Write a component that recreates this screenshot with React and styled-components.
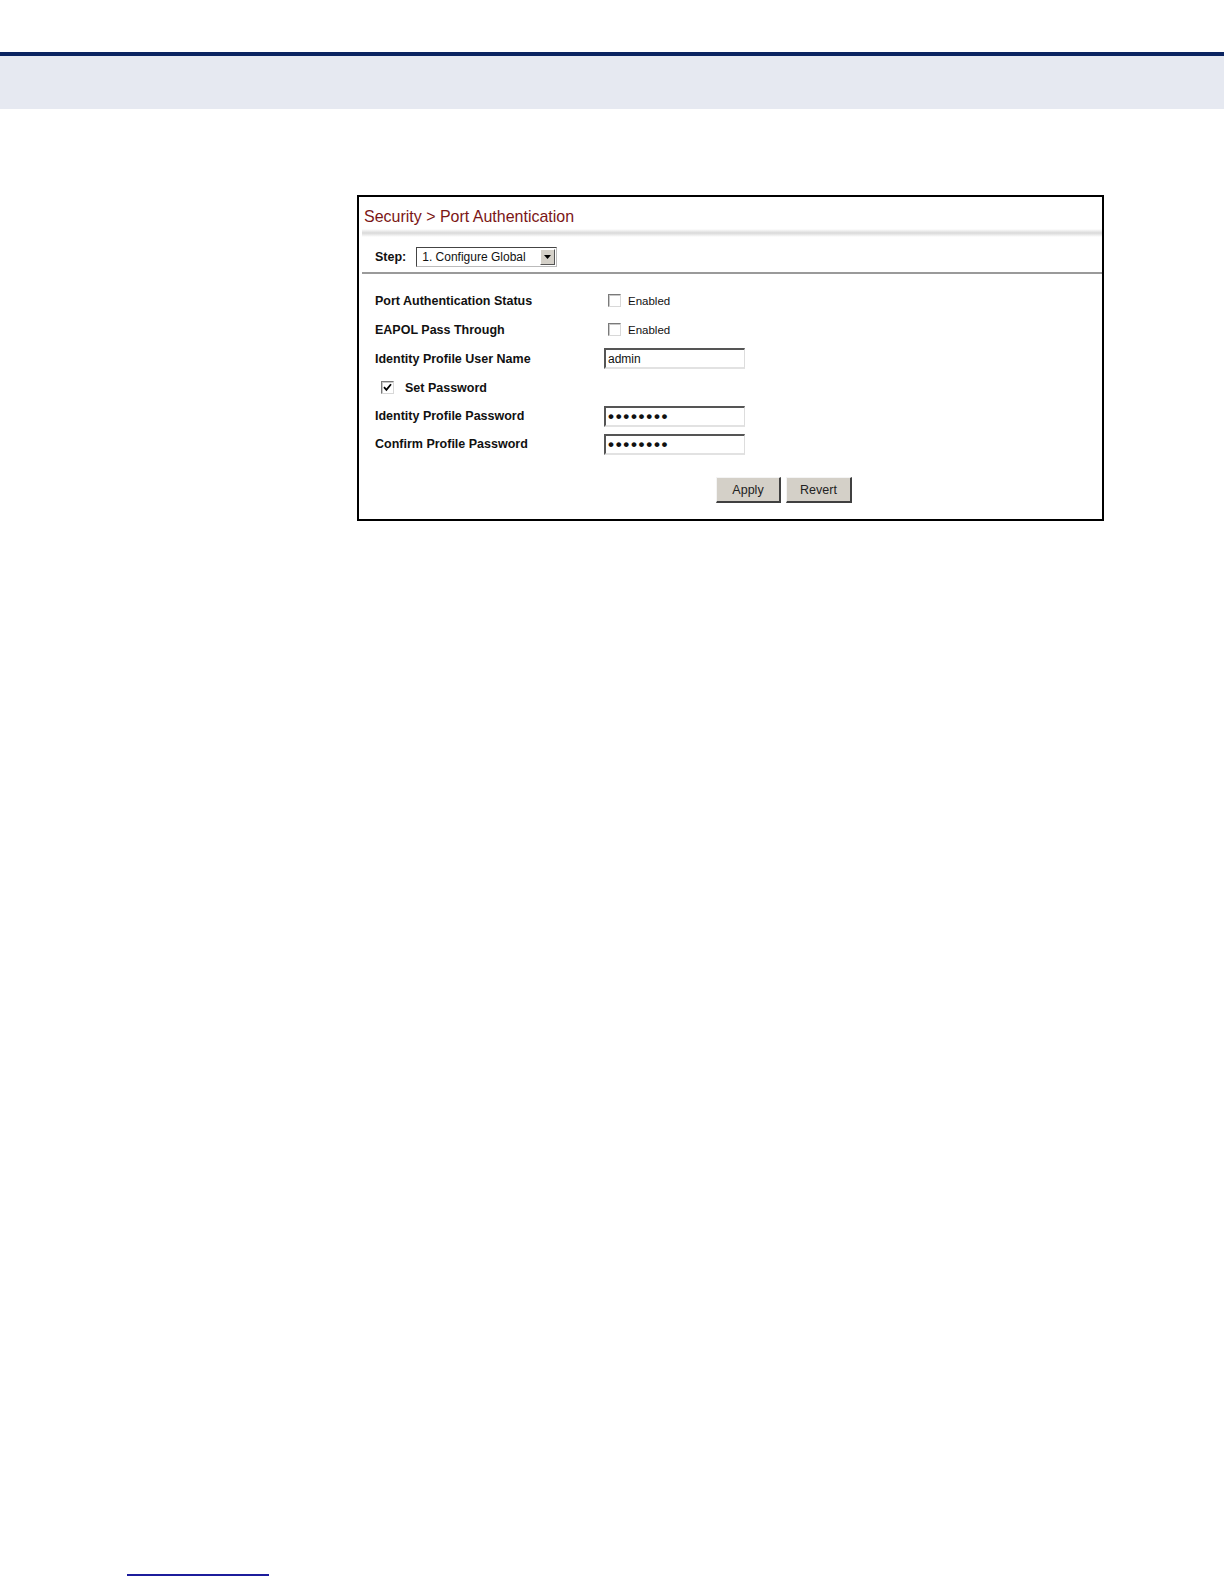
import React from "react";
import styled, { createGlobalStyle } from "styled-components";

const GlobalStyle = createGlobalStyle`
  body {
    margin: 0;
    background: #fff;
    font-family: "Liberation Sans", Arial, sans-serif;
  }
`;

const Page = styled.div`
  width: 1224px;
  height: 1584px;
  display: flex;
  flex-direction: column;
`;

const TopRule = styled.div`
  margin-top: 52px;
  height: 4px;
  background: #0b2461;
`;

const Band = styled.div`
  height: 53px;
  background: #e6e9f1;
`;

const Content = styled.div`
  padding: 86px 0 0 357px;
`;

const Panel = styled.div`
  width: 743px;
  height: 322px;
  border: 2px solid #000;
  background: #fff;
  display: flex;
  flex-direction: column;
`;

const Title = styled.div`
  height: 32px;
  padding: 0 0 2px 5px;
  display: flex;
  align-items: flex-end;
  font-size: 17px;
  color: #7b1616;
  line-height: 20px;
  box-sizing: border-box;
`;

const TitleText = styled.span`
  display: inline-block;
  transform: scaleX(0.94);
  transform-origin: left;
  white-space: nowrap;
`;

const Shade = styled.div`
  height: 8px;
  margin-left: 3px;
  background: linear-gradient(#fff, #d9d9d9 50%, #fff);
`;

const StepRow = styled.div`
  display: flex;
  align-items: center;
  gap: 10px;
  padding: 10px 0 5px 13px;
  margin-left: 3px;
  border-bottom: 2px solid #9a9a9a;
`;

const Label = styled.span`
  font-size: 12.5px;
  font-weight: bold;
  color: #111;
  white-space: nowrap;
`;

const Select = styled.div`
  width: 141px;
  height: 20px;
  box-sizing: border-box;
  border: 1px solid #444;
  border-right-color: #bbb;
  border-bottom-color: #bbb;
  display: flex;
  align-items: center;
  justify-content: space-between;
  padding-left: 5px;
  font-size: 12px;
  color: #111;
`;

const SelectArrow = styled.div`
  width: 15px;
  height: 16px;
  margin-right: 1px;
  background: #d4d0c8;
  box-sizing: border-box;
  border: 1px solid #fff;
  border-right-color: #555;
  border-bottom-color: #555;
  display: flex;
  align-items: center;
  justify-content: center;
`;

const Form = styled.div`
  display: grid;
  grid-template-columns: 229px 1fr;
  grid-template-rows: 29px 29px 29px 29px 28px 28px;
  padding: 12px 0 0 16px;
  align-items: center;
`;

const ValueCell = styled.div`
  display: flex;
  align-items: center;
  gap: 7px;
  padding-left: ${(p) => (p.$box ? "4px" : "0")};
`;

const SpanRow = styled.div`
  grid-column: 1 / span 2;
  display: flex;
  align-items: center;
  gap: 11px;
  padding-left: 6px;
`;

const Box = styled.div`
  width: 13px;
  height: 13px;
  box-sizing: border-box;
  background: #fff;
  border: 1px solid #7a7a7a;
  border-right-color: #d8d8d8;
  border-bottom-color: #d8d8d8;
  box-shadow: inset 1px 1px 0 #c8c8c8;
  display: flex;
  align-items: center;
  justify-content: center;
`;

const SmallText = styled.span`
  font-size: 11.5px;
  color: #111;
`;

const TextBox = styled.div`
  width: 141px;
  height: 21px;
  box-sizing: border-box;
  border: 2px solid #555;
  border-right: 1px solid #ddd;
  border-bottom: 2px solid #e2e2e2;
  display: flex;
  align-items: center;
  padding-left: 2px;
  font-size: 12px;
  color: #111;
`;

const Dots = styled.span`
  font-size: 17px;
  letter-spacing: 1.7px;
  font-weight: bold;
  line-height: 1;
`;

const Buttons = styled.div`
  display: flex;
  gap: 5px;
  padding: 19px 0 0 357px;
`;

const Button = styled.div`
  width: ${(p) => p.$w}px;
  height: 26px;
  box-sizing: border-box;
  background: #d4d0c8;
  border: 1px solid #f4f4f4;
  border-right: 2px solid #404040;
  border-bottom: 2px solid #404040;
  display: flex;
  align-items: center;
  justify-content: center;
  font-size: 12.5px;
  color: #222;
`;

const Footer = styled.div`
  margin-top: auto;
  margin-left: 127px;
  margin-bottom: 8px;
  width: 142px;
  height: 2px;
  background: #1c1c9c;
`;

const Check = () => (
  <svg width="9" height="9" viewBox="0 0 9 9">
    <path d="M1 4.2 L3.4 6.8 L8 1.2" fill="none" stroke="#000" strokeWidth="1.8" />
  </svg>
);

const Arrow = () => (
  <svg width="7" height="4" viewBox="0 0 7 4">
    <path d="M0 0 H7 L3.5 4 Z" fill="#000" />
  </svg>
);

const App = () => (
  <>
    <GlobalStyle />
    <Page>
      <TopRule />
      <Band />
      <Content>
        <Panel>
          <Title>
            <TitleText>Security &gt; Port Authentication</TitleText>
          </Title>
          <Shade />
          <StepRow>
            <Label>Step:</Label>
            <Select>
              1. Configure Global
              <SelectArrow>
                <Arrow />
              </SelectArrow>
            </Select>
          </StepRow>
          <Form>
            <Label>Port Authentication Status</Label>
            <ValueCell $box>
              <Box />
              <SmallText>Enabled</SmallText>
            </ValueCell>
            <Label>EAPOL Pass Through</Label>
            <ValueCell $box>
              <Box />
              <SmallText>Enabled</SmallText>
            </ValueCell>
            <Label>Identity Profile User Name</Label>
            <ValueCell>
              <TextBox>admin</TextBox>
            </ValueCell>
            <SpanRow>
              <Box>
                <Check />
              </Box>
              <Label>Set Password</Label>
            </SpanRow>
            <Label>Identity Profile Password</Label>
            <ValueCell>
              <TextBox>
                <Dots>••••••••</Dots>
              </TextBox>
            </ValueCell>
            <Label>Confirm Profile Password</Label>
            <ValueCell>
              <TextBox>
                <Dots>••••••••</Dots>
              </TextBox>
            </ValueCell>
          </Form>
          <Buttons>
            <Button $w={65}>Apply</Button>
            <Button $w={66}>Revert</Button>
          </Buttons>
        </Panel>
      </Content>
      <Footer />
    </Page>
  </>
);

export default App;
